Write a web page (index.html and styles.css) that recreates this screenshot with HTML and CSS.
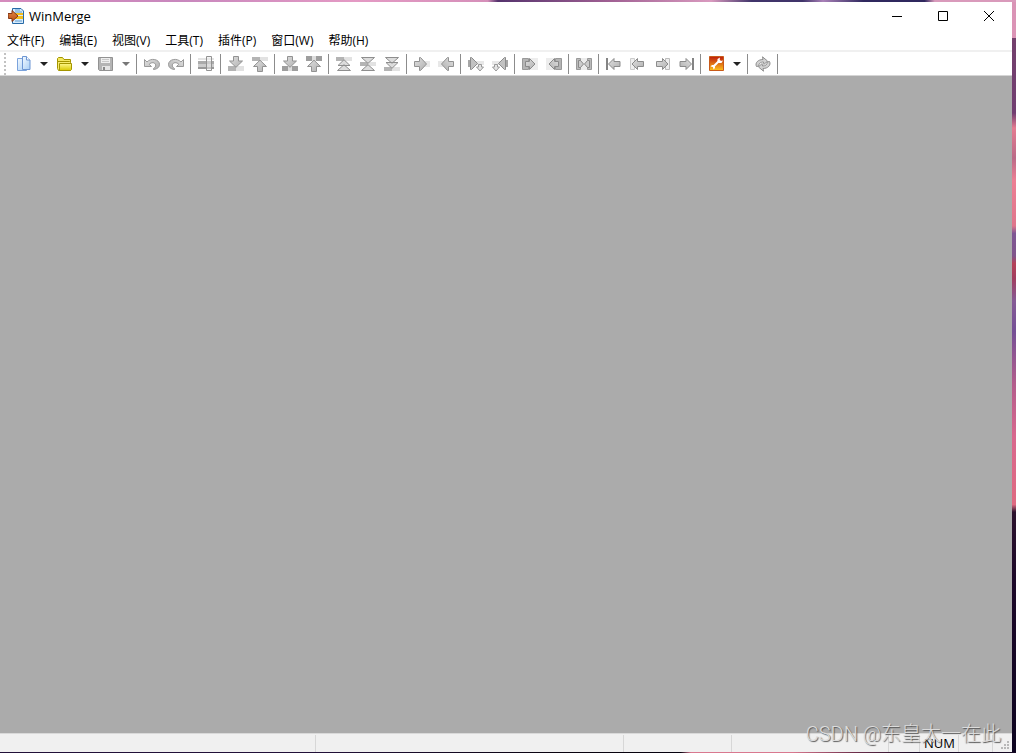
FILE: index.html
```
<!DOCTYPE html>
<html lang="zh-CN">
<head>
<meta charset="utf-8">
<title>WinMerge</title>
<link rel="stylesheet" href="styles.css">
</head>
<body>
<svg class="defs" aria-hidden="true">
  <defs>
    <linearGradient id="metal" x1="0" y1="0" x2="1" y2="1"><stop offset="0" stop-color="#e0e0e0"/><stop offset="1" stop-color="#b0b0b0"/></linearGradient>
    <linearGradient id="page" x1="0" y1="0" x2="1" y2="1"><stop offset="0" stop-color="#f4faff"/><stop offset="1" stop-color="#a9cff5"/></linearGradient>
    <linearGradient id="gold" x1="0" y1="0" x2="0" y2="1"><stop offset="0" stop-color="#fff889"/><stop offset="1" stop-color="#d9c800"/></linearGradient>
    <linearGradient id="fire" x1="0" y1="0" x2="0" y2="1"><stop offset="0" stop-color="#bd1b0c"/><stop offset="1" stop-color="#ffc31b"/></linearGradient>
    <linearGradient id="rust" x1="0" y1="0" x2="0" y2="1"><stop offset="0" stop-color="#e68a45"/><stop offset="1" stop-color="#b94d12"/></linearGradient>
    <g id="down"><path d="M5.500.500h5v4.500h4L8 11.300 1.500 5h4z" fill="url(#metal)" stroke="#929292"/></g>
    <g id="up"><path d="M8 4.200l6.500 6.300h-4v5h-5v-5h-4z" fill="url(#metal)" stroke="#929292"/></g>
    <g id="right"><path d="M.500 5.500h5v-4h1L12.500 8l-6 6.500h-1v-4h-5z" fill="url(#metal)" stroke="#929292"/></g>
    <g id="bars"><path d="M0 1h8v4H0z" fill="#b4b4b4"/><path d="M8 1h8v4H8z" fill="#e2e2e2"/></g>
    <g id="drop"><path d="M10.500 8.500h3v2.500h2L12 15 8.500 11h2z" fill="#e4e4e4" stroke="#999"/></g>
  </defs>
</svg>
<main class="window">
  <header class="titlebar">
    <svg class="appicon" viewBox="0 0 16 16">
      <path d="M4.500.5H13l2.500 2.500v12.500h-11z" fill="#d7eafa" stroke="#276aa7"/><path d="M7 2h5M7 4h7M7 13h7" stroke="#5d9bd0"/><path d="M6 5h9v2H6zM6 8h9v3H6z" fill="#f4bd1d"/>
      <path d="M0 5.500h4v-3L10 8l-6 5.500v-3H.500z" fill="url(#rust)" stroke="#853715"/>
    </svg>
    <h1 class="title">WinMerge</h1>
    <div class="controls">
      <button class="control" aria-label="最小化"><svg viewBox="0 0 10 10"><path d="M0 5.500h10"/></svg></button>
      <button class="control" aria-label="最大化"><svg viewBox="0 0 10 10"><path d="M.5.500h9v9h-9z"/></svg></button>
      <button class="control" aria-label="关闭"><svg viewBox="0 0 10 10"><path d="M0 0l10 10M10 0L0 10"/></svg></button>
    </div>
  </header>
  <nav class="menubar">
    <button class="menu">文件(F)</button><button class="menu">编辑(E)</button><button class="menu">视图(V)</button><button class="menu">工具(T)</button><button class="menu">插件(P)</button><button class="menu">窗口(W)</button><button class="menu">帮助(H)</button>
  </nav>
  <div class="toolbar" role="toolbar" aria-label="工具栏">
    <span class="grip"></span>
    <button class="tool" aria-label="新建"><svg viewBox="0 0 16 16"><path d="M2.500 2.500h6l3 3v9h-9z" fill="url(#page)" stroke="#7ba3dc"/><path d="M7.500.5h4l3.500 3.500v9.500H7.500z" fill="url(#page)" stroke="#6d96d3"/><path d="M11.500.500V4H15" fill="#fff" stroke="#6d96d3"/></svg></button>
    <button class="caret" aria-label="新建选项"></button>
    <button class="tool" aria-label="打开"><svg viewBox="0 0 16 16"><path d="M1.500 12V2.500l1-1h4l1.500 2h6.500v3" fill="#f5e960" stroke="#a49500"/><path d="M1.500 5.500h12l1 1v8h-12l-1-2z" fill="#f7ec70" stroke="#a49500"/><path d="M3.500 7.500h12v6l-1 1H3.500z" fill="url(#gold)" stroke="#a49500"/></svg></button>
    <button class="caret" aria-label="打开选项"></button>
    <button class="tool" aria-label="保存" disabled><svg viewBox="0 0 16 16"><path d="M1.500 1.500h14v13h-13l-1-1z" fill="#b4b4b4" stroke="#929292"/><path d="M4 2h9v5H4z" fill="#eee"/><path d="M5 3.500h7M5 5.500h7" stroke="#c9c9c9"/><path d="M5 10h8v4H5z" fill="#e4e4e4"/><path d="M6 11h2v3H6z" fill="#888"/></svg></button>
    <button class="caret dim" aria-label="保存选项" disabled></button>
    <span class="sep"></span>
    <button class="tool" aria-label="撤销" disabled><svg viewBox="0 0 16 16"><path id="undo" d="M.500 3.500v7h7L5.200 8.300c2-2.300 5.800-2.200 6.500.6.200 1.500-.7 2.700-2.200 3.600v1c4.200-.5 6-2.500 6-5.200C15.300 3.200 7 1.500 3 6z" fill="url(#metal)" stroke="#999"/></svg></button>
    <button class="tool" aria-label="重做" disabled><svg viewBox="0 0 16 16"><use href="#undo" transform="matrix(-1 0 0 1 16 0)"/></svg></button>
    <span class="sep"></span>
    <button class="tool" aria-label="行内差异" disabled><svg viewBox="0 0 16 16"><path d="M0 2h16v2H0z" fill="#e4e4e4"/><path d="M0 5h16v3H0z" fill="#aaa"/><path d="M0 8h16v3H0z" fill="#ccc"/><path d="M0 11h16v2H0z" fill="#999"/><path d="M8.500.5h5v14h-5z" fill="#eee" fill-opacity=".5" stroke="#929292"/></svg></button>
    <span class="sep"></span>
    <button class="tool" aria-label="下一处差异" disabled><svg viewBox="0 0 16 16"><path d="M0 10h8v5H0z" fill="#b4b4b4"/><path d="M8 10h8v5H8z" fill="#e2e2e2"/><use href="#down"/></svg></button>
    <button class="tool" aria-label="上一处差异" disabled><svg viewBox="0 0 16 16"><use href="#bars"/><use href="#up"/></svg></button>
    <span class="sep"></span>
    <button class="tool" aria-label="下一处冲突" disabled><svg viewBox="0 0 16 16"><path d="M0 10h6v5H0zM10 10h6v5h-6z" fill="#9e9e9e"/><path d="M6 10h4v5H6z" fill="#ddd"/><use href="#down"/></svg></button>
    <button class="tool" aria-label="上一处冲突" disabled><svg viewBox="0 0 16 16"><path d="M0 0h6v5H0zM10 0h6v5h-6z" fill="#9e9e9e"/><path d="M6 0h4v5H6z" fill="#ddd"/><use href="#up"/></svg></button>
    <span class="sep"></span>
    <button class="tool" aria-label="第一处差异" disabled><svg viewBox="0 0 16 16"><use href="#bars"/><path d="M8 3.700l6 5.800H2zM8 8.700l6.500 5.800h-13z" fill="#dcdcdc" stroke="#8e8e8e"/></svg></button>
    <button class="tool" aria-label="当前差异" disabled><svg viewBox="0 0 16 16"><path d="M0 6h8v4H0z" fill="#b4b4b4"/><path d="M8 6h8v4H8z" fill="#e2e2e2"/><path d="M1.500 1.500h13L8 7.300zM8 8.700l6.500 5.800h-13z" fill="#dcdcdc" stroke="#8e8e8e"/></svg></button>
    <button class="tool" aria-label="最后差异" disabled><svg viewBox="0 0 16 16"><use href="#bars" y="10"/><path d="M2 6.500h12l-6 5.800zM1.500 1.500h13L8 7.300z" fill="#dcdcdc" stroke="#8e8e8e"/></svg></button>
    <span class="sep"></span>
    <button class="tool" aria-label="复制到右侧" disabled><svg viewBox="0 0 16 16"><path d="M0 6h5v4H0z" fill="#aaa"/><path d="M9 5h7v6H9z" fill="#e8e8e8"/><use href="#right"/></svg></button>
    <button class="tool" aria-label="复制到左侧" disabled><svg viewBox="0 0 16 16"><path d="M0 5h7v6H0z" fill="#e8e8e8"/><path d="M11 6h5v4h-5z" fill="#aaa"/><use href="#right" transform="matrix(-1 0 0 1 16 0)"/></svg></button>
    <span class="sep"></span>
    <button class="tool" aria-label="复制到右侧并前进" disabled><svg viewBox="0 0 16 16"><g id="advance"><path d="M7 5h9v4H7z" fill="#e8e8e8"/><path d="M0 4h4v7H0z" fill="#a6a6a6"/><path d="M2.500 1.500h1L9.500 7.500l-6 6h-1z" fill="#c2c2c2" stroke="#8c8c8c"/><use href="#drop"/></g></svg></button>
    <button class="tool" aria-label="复制到左侧并前进" disabled><svg viewBox="0 0 16 16"><use href="#advance" transform="matrix(-1 0 0 1 16 0)"/></svg></button>
    <span class="sep"></span>
    <button class="tool" aria-label="全部复制到右侧" disabled><svg viewBox="0 0 16 16"><g id="all"><path d="M.5 2.500h6v11h-6z" fill="#b5b5b5" stroke="#999"/><path d="M8 2h8v12H8z" fill="#ededed"/><path d="M3.500 5.500h4v-3L13 8l-5.500 5.500v-3h-4z" fill="url(#metal)" stroke="#8a8a8a"/></g></svg></button>
    <button class="tool" aria-label="全部复制到左侧" disabled><svg viewBox="0 0 16 16"><use href="#all" transform="matrix(-1 0 0 1 16 0)"/></svg></button>
    <span class="sep"></span>
    <button class="tool" aria-label="自动合并" disabled><svg viewBox="0 0 16 16"><path d="M.500 2.500h4v11h-4zM11.500 2.500h4v11h-4z" fill="#bbb" stroke="#999"/><path d="M5 2h6v12H5z" fill="#ececec"/><path d="M2.500 4.500h2L7.500 8l-3 3.500h-2zM13.500 4.500h-2L8.500 8l3 3.500h2z" fill="#ccc" stroke="#8a8a8a"/></svg></button>
    <span class="sep"></span>
    <button class="tool" aria-label="第一个文件" disabled><svg viewBox="0 0 16 16"><g id="first"><path d="M1 2v12" stroke="#848484" stroke-width="2"/><path d="M2.500 8L8 2.500v3h6v5H8v3z" fill="url(#metal)" stroke="#8c8c8c"/></g></svg></button>
    <button class="tool" aria-label="上一个文件" disabled><svg viewBox="0 0 16 16"><path d="M.500 2.500h4v11h-4z" fill="#eee" stroke="#ccc"/><path d="M2 8l5.500-5.500v3h6v5h-6v3z" fill="url(#metal)" stroke="#8c8c8c"/></svg></button>
    <button class="tool" aria-label="下一个文件" disabled><svg viewBox="0 0 16 16"><path d="M11.500 2.500h4v11h-4z" fill="#eee" stroke="#bbb"/><path d="M2.500 5.500h6v-3L14 8l-5.500 5.500v-3h-6z" fill="url(#metal)" stroke="#8c8c8c"/></svg></button>
    <button class="tool" aria-label="最后一个文件" disabled><svg viewBox="0 0 16 16"><use href="#first" transform="matrix(-1 0 0 1 16 0)"/></svg></button>
    <span class="sep"></span>
    <button class="tool" aria-label="选项"><svg viewBox="0 0 16 16"><path d="M1.500.5H15.500v14h-14z" fill="url(#fire)" stroke="#c85a19"/><path d="M5 11l7-7" stroke="#fff" stroke-width="2"/><path d="M12 1.500L9.500 3v3l1 1h3L15 4.500l-2.500.5-1-1zM6.500 9H4l-1.500 1.500L5 11l.5 2.500L7 12z" fill="#fff"/></svg></button>
    <button class="caret" aria-label="选项菜单"></button>
    <span class="sep"></span>
    <button class="tool" aria-label="刷新" disabled><svg viewBox="0 0 16 16"><path id="cycle" d="M1.500 10.500C-.3 7 3 3.500 8 3.500L7.500.8l5 4.200-3.500 3.500-.5-2.500C5.500 6 3.500 7.500 4 10z" fill="#d2d2d2" stroke="#8e8e8e"/><use href="#cycle" transform="rotate(180 8 8)"/></svg></button>
    <span class="sep"></span>
  </div>
  <section class="workspace" aria-label="工作区"></section>
  <footer class="statusbar">
    <span class="pane"></span><span class="pane"></span><span class="pane"></span><span class="pane"></span><span class="pane"></span><span class="pane">NUM</span><span class="pane"></span>
    <span class="corner"><svg class="sizegrip" viewBox="0 0 9 9"><path d="M6 0h2v2H6zM3 3h2v2H3zM6 3h2v2H6zM0 6h2v2H0zM3 6h2v2H3zM6 6h2v2H6z"/></svg></span>
  </footer>
</main>
<div class="watermark">CSDN @东皇太一在此</div>
</body>
</html>
```
FILE: styles.css
```
* { box-sizing: border-box; }
body {
  margin: 0;
  min-height: 100vh;
  display: flex;
  padding: 2px 4px 1px 0;
  font: 12px/16px "Open Sans", "Noto Sans CJK SC", sans-serif;
  color: #000;
  background:
    linear-gradient(90deg, #211038 0 32%, #09030f 55%, #05000d 67%, #d9788f 68% 78%, #70304c 84%, #160923 90%) bottom / 100% 1px no-repeat,
    linear-gradient(90deg, #d58bbd 0, #c887bd 18%, #e49ac4 35%, #d58fb9 48%, #55336d 49%, #a06093 60%, #d99abf 70%, #40346a 74% 79%, #a981b8 81%, #2f285e 85% 91%, #d99abb 92%) top / 100% 2px no-repeat,
    linear-gradient(#d994b6 0, #dc94b6 5%, #74406d 5%, #713e71 15%, #e57c91 17%, #bb6b88 21%, #ed7f94 24%, #df768c 30%, #7f5794 31%, #80558b 34%, #b54258 35%, #a13e60 37%, #855b96 40%, #755096 44%, #b35d8c 51%, #d9688e 58%, #df6a81 67%, #2c122d 68%, #1d0829 77%, #0d0420 100%);
}
button {
  margin: 0;
  padding: 0;
  border: 0;
  background: none;
  font: inherit;
  color: inherit;
}
.defs { position: absolute; width: 0; height: 0; }
.window { flex: 1; display: flex; flex-direction: column; background: #fff; }
.titlebar { display: flex; align-items: center; height: 28px; padding-left: 8px; }
.appicon { width: 16px; height: 16px; margin-right: 5px; }
.title { margin: 0; font-size: 13px; font-weight: 400; }
.controls { display: flex; margin-left: auto; }
.control { width: 46px; height: 28px; display: grid; place-items: center; }
.control svg { width: 10px; height: 10px; fill: none; stroke: #000; overflow: visible; }
.menubar { display: flex; height: 20px; padding-top: 2px; }
.menu { padding: 0 8px 0 7px; }
.toolbar { display: flex; align-items: center; height: 26px; border-bottom: 1px solid #d5d5d5; border-top: 2px solid #f0f0f0; }
.grip { width: 11px; height: 22px; background: repeating-linear-gradient(#c2c2c2 0 2px, #fff 2px 4px) 4px 0 / 2px 100% no-repeat; }
.tool { width: 24px; height: 22px; display: grid; place-items: center; }
.tool svg { width: 16px; height: 16px; }
.caret { width: 17px; height: 22px; display: grid; place-items: center; }
.caret::before { content: ""; border: 4px solid transparent; border-top-color: #222; border-bottom: 0; }
.dim::before { border-top-color: #777; }
.sep { width: 6px; height: 20px; background: linear-gradient(#8c8c8c, #8c8c8c) 2px 0 / 1px 100% no-repeat; }
.workspace { flex: 1; background: #ababab; }
.statusbar {
  display: grid;
  grid-template-columns: 1fr 308px 108px 157px 31px 39px 34px 19px;
  height: 19px;
  padding-top: 1px;
  border-top: 1px solid #d9d9d9;
  background: #f0f0f0;
}
.pane { border-right: 1px solid #d7d7d7; padding-left: 4px; font-size: 13px; }
.corner { display: grid; place-items: end; padding: 2px; }
.sizegrip { width: 9px; height: 9px; fill: #b8b8b8; }
.watermark {
  position: absolute;
  right: 15px;
  bottom: 6px;
  font: 300 20px/26px Roboto, "Noto Sans CJK SC", sans-serif;
  color: #dcdcdc;
  text-shadow: 1px 1px 1px #555;
  white-space: nowrap;
  pointer-events: none;
}
```
